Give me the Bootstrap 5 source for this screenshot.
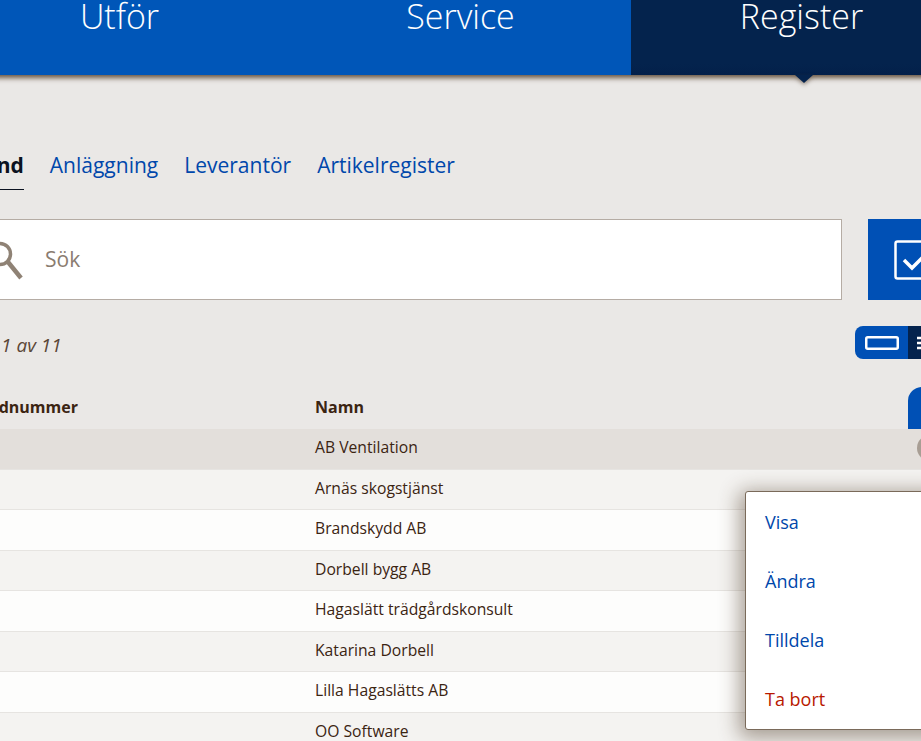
<!DOCTYPE html>
<html lang="sv">
<head>
  <meta charset="UTF-8" />
  <meta name="viewport" content="width=device-width, initial-scale=1" />
  <title>Register - Kund</title>
  <link href="https://cdn.jsdelivr.net/npm/bootstrap@5.3.3/dist/css/bootstrap.min.css" rel="stylesheet" />
  <style>
    html, body { height: 100%; overflow: hidden; }
    body {
      background: #eae8e6;
      color: #3b2412;
      font-family: "Open Sans", sans-serif;
    }
    .page-shift { margin-left: -51px; width: 1023px; }

    /* top menu */
    .top-menu {
      display: grid;
      grid-template-columns: repeat(3, 341px);
      height: 75px;
      background: #0056b8;
      box-shadow: 0 3px 5px rgba(90, 70, 50, .9);
      position: relative;
    }
    .top-item {
      color: #fff;
      font-size: 34px;
      font-weight: 300;
      line-height: 32px;
      text-align: center;
      text-decoration: none;
    }
    .top-item.current {
      background: linear-gradient(#04234d, #04234d 85%, #03204a);
      position: relative;
    }
    .top-item.current::after {
      content: "";
      position: absolute;
      left: 164px;
      top: 75px;
      border: solid transparent;
      border-width: 8px 9px 0;
      border-top-color: #04234d;
      filter: drop-shadow(0 2px 2px rgba(70, 50, 30, .5));
    }

    .main-area { padding: 75px 24px 0 24px; }

    /* sub tabs */
    .sub-tabs { gap: 26px; font-size: 21px; line-height: 30px; margin-left: -4px; }
    .sub-tabs a { color: #0047ab; text-decoration: none; padding-bottom: 9px; display: block; }
    .sub-tabs a.current { color: #0b1220; font-weight: 700; border-bottom: 1px solid #0b1220; }

    /* search */
    .search-row { margin-top: 29px; gap: 26px; height: 81px; }
    .search-box {
      background: #fff;
      border: 1px solid #b5aca4;
      padding-left: 14px;
    }
    .search-box input {
      border: 0;
      outline: 0;
      background: transparent;
      font-size: 21px;
      flex: 1;
      margin: 1px 0 0 19px;
    }
    .search-box input::placeholder { color: #8a7c70; opacity: 1; }
    .check-btn {
      width: 80px;
      background: #0050b5;
      border: 0;
      border-radius: 0;
      padding: 0 0 0 26px;
    }

    .count-row { height: 84px; padding-top: 26px; }
    .count-text { font-size: 19px; font-style: italic; color: #5b4636; margin: 5px 0 0 28px; }
    .view-toggle {
      height: 33px;
      border-radius: 8px;
      overflow: hidden;
      background: #0050b5;
      width: 93px;
    }
    .view-toggle span { display: flex; align-items: center; justify-content: center; height: 100%; }
    .view-one { width: 53px; }
    .view-two { width: 40px; background: #04234d; justify-content: flex-start !important; padding-left: 9px; }

    /* table */
    .table-area { position: relative; margin: 0 -24px; }
    .list-table { table-layout: fixed; width: 1023px; margin: 0; font-size: 15.7px; }
    .list-table th, .list-table td {
      height: 40.5px;
      padding: 0;
      vertical-align: middle;
      background: transparent;
      box-shadow: none;
      color: #3b2412;
      border: 0;
    }
    .list-table th { height: 44.5px; padding-top: 1.5px; font-size: 16px; font-weight: 700; }
    .list-table th:last-child { vertical-align: bottom; }
    .list-table td { border-bottom: 1px solid #e6e4e1; padding-bottom: 1px; }
    .list-table tbody tr:nth-child(odd) td { background: #fdfdfc; }
    .list-table tbody tr:nth-child(even) td { background: #f4f3f1; }
    .list-table tbody tr.hovered td { background: #e3dfdb; }
    .col-one { width: 366px; padding-left: 18px !important; }
    .col-two { width: 593px; }
    .add-tab {
      display: block;
      height: 42px;
      width: 60px;
      background: #0050b5;
      border-radius: 14px 14px 0 0;
    }
    .row-circle {
      display: block;
      width: 26px;
      height: 26px;
      border-radius: 50%;
      background: #a89e94;
      margin-left: 9px;
    }

    /* row menu */
    .row-menu {
      display: block;
      top: 107px;
      left: 796px;
      width: 220px;
      height: 239px;
      padding: 1px 0 0;
      background: #fff;
      border: 1px solid #7a6a5a;
      border-radius: 3px;
      box-shadow: -2px 4px 20px 4px rgba(70, 50, 30, .45);
    }
    .row-menu .dropdown-item {
      height: 59px;
      display: flex;
      align-items: center;
      padding: 0 0 0 19px;
      font-size: 18px;
      color: #0047ab;
    }
    .row-menu .dropdown-item.remove { color: #b81800; }
  </style>
</head>
<body>
  <div class="page-shift">
    <!-- Top menu -->
    <nav class="top-menu">
      <a class="top-item" href="#">Utför</a>
      <a class="top-item" href="#">Service</a>
      <a class="top-item current" href="#">Register</a>
    </nav>

    <div class="main-area">
      <!-- Sub tabs -->
      <div class="d-flex sub-tabs">
        <a class="current" href="#">Kund</a>
        <a href="#">Anläggning</a>
        <a href="#">Leverantör</a>
        <a href="#">Artikelregister</a>
      </div>

      <!-- Search -->
      <div class="d-flex search-row">
        <div class="d-flex align-items-center flex-grow-1 search-box">
          <svg width="36" height="40" viewBox="0 0 36 40" fill="none" stroke="#8f8275">
            <circle cx="12" cy="14" r="10.5" stroke-width="3.5"/>
            <path d="M20 22 L33 38" stroke-width="4.5"/>
          </svg>
          <input type="text" placeholder="Sök" />
        </div>
        <button class="btn check-btn" type="button" aria-label="Välj">
          <svg class="d-block" width="54" height="40" viewBox="0 0 54 40" fill="none" stroke="#fff">
            <rect x="1.5" y="1.5" width="38" height="37" rx="2" stroke-width="2.5"/>
            <path d="M10 20 L18 28 L36 10" stroke-width="3.5"/>
          </svg>
        </button>
      </div>

      <!-- Count and view toggle -->
      <div class="d-flex align-items-start justify-content-between count-row">
        <div class="count-text">1 av 11</div>
        <div class="d-flex view-toggle">
          <span class="view-one">
            <svg width="34" height="14" viewBox="0 0 34 14" fill="none" stroke="#fff" stroke-width="2.5">
              <rect x="1.25" y="1.25" width="31.5" height="11.5" rx="1.5"/>
            </svg>
          </span>
          <span class="view-two">
            <svg width="16" height="14" viewBox="0 0 16 14" fill="none" stroke="#fff" stroke-width="2.5">
              <path d="M0 2H16M0 7H16M0 12H16"/>
            </svg>
          </span>
        </div>
      </div>

      <!-- Customer table -->
      <div class="table-area">
        <table class="table list-table">
          <thead>
            <tr>
              <th class="col-one">Kundnummer</th>
              <th class="col-two">Namn</th>
              <th><span class="add-tab"></span></th>
            </tr>
          </thead>
          <tbody>
            <tr class="hovered"><td class="col-one"></td><td>AB Ventilation</td><td><span class="row-circle"></span></td></tr>
            <tr><td class="col-one"></td><td>Arnäs skogstjänst</td><td></td></tr>
            <tr><td class="col-one"></td><td>Brandskydd AB</td><td></td></tr>
            <tr><td class="col-one"></td><td>Dorbell bygg AB</td><td></td></tr>
            <tr><td class="col-one"></td><td>Hagaslätt trädgårdskonsult</td><td></td></tr>
            <tr><td class="col-one"></td><td>Katarina Dorbell</td><td></td></tr>
            <tr><td class="col-one"></td><td>Lilla Hagaslätts AB</td><td></td></tr>
            <tr><td class="col-one"></td><td>OO Software</td><td></td></tr>
          </tbody>
        </table>

        <!-- Row menu -->
        <div class="dropdown-menu row-menu">
          <a class="dropdown-item" href="#">Visa</a>
          <a class="dropdown-item" href="#">Ändra</a>
          <a class="dropdown-item" href="#">Tilldela</a>
          <a class="dropdown-item remove" href="#">Ta bort</a>
        </div>
      </div>
    </div>
  </div>
  <script src="https://cdn.jsdelivr.net/npm/bootstrap@5.3.3/dist/js/bootstrap.bundle.min.js"></script>
</body>
</html>
